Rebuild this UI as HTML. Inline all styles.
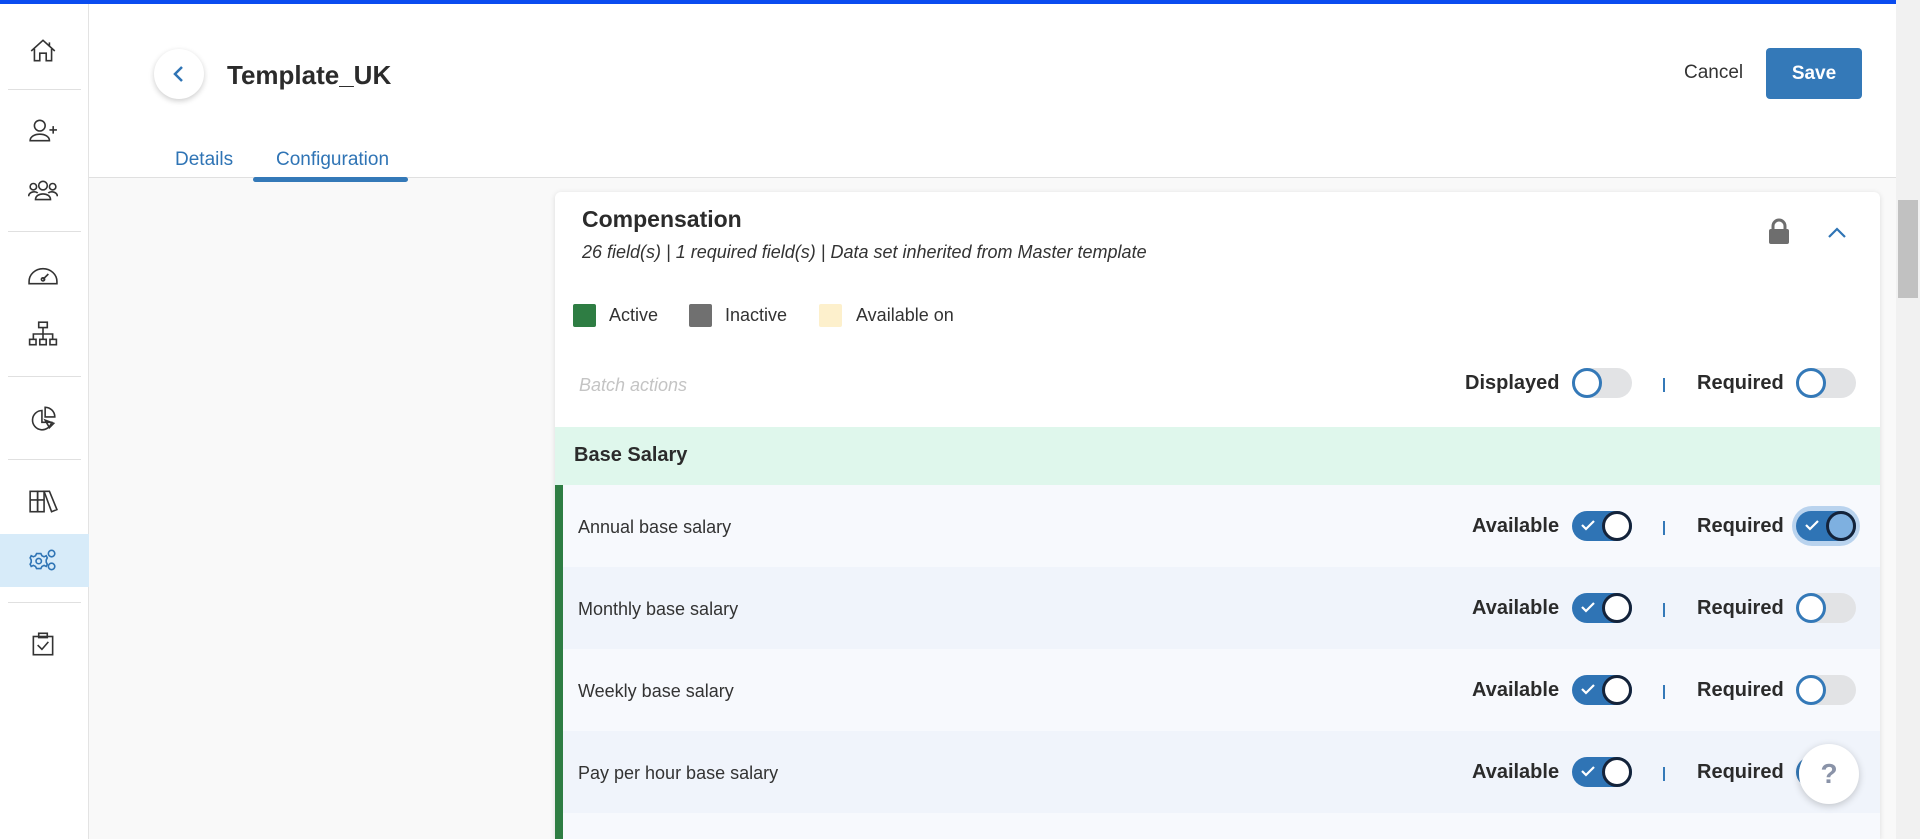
<!DOCTYPE html>
<html><head><meta charset="utf-8"><style>
*{box-sizing:border-box;margin:0;padding:0}
body{width:1920px;height:839px;overflow:hidden;font-family:"Liberation Sans",sans-serif;background:#f9f9f9;position:relative;color:#333}
.topbar{position:absolute;left:0;top:0;width:1920px;height:4px;background:#0a4cf0}
.side{position:absolute;left:0;top:4px;width:89px;height:835px;background:#fff;border-right:1px solid #e3e3e3}
.side .div{position:absolute;left:8px;width:73px;height:1px;background:#e0e0e0}
.side svg{position:absolute;left:28px;width:30px;height:30px;fill:none;stroke:#333;stroke-width:1.5}
.hl{position:absolute;left:0;top:530px;width:89px;height:53px;background:#d7ebf9}
.header{position:absolute;left:89px;top:4px;width:1807px;height:174px;background:#fff;border-bottom:1px solid #e0e0e0}
.back{position:absolute;left:65px;top:45px;width:50px;height:50px;border-radius:50%;background:#fff;box-shadow:0 2px 6px rgba(0,0,0,.2)}
.title{position:absolute;top:56px;font-size:26px;font-weight:bold;color:#2b2b2b}
.cancel{position:absolute;top:58px;font-size:19px;color:#333}
.save{position:absolute;top:44px;width:96px;height:51px;background:#3479b8;border-radius:4px;color:#fff;font-size:19px;font-weight:bold;text-align:center;line-height:51px}
.tab{position:absolute;top:145px;font-size:19px;color:#2f74b5}
.uline{position:absolute;width:155px;height:5px;border-radius:3px;background:#3479b8}
.scroll{position:absolute;left:1896px;top:0;width:24px;height:839px;background:#f1f1f1}
.thumb{position:absolute;left:1898px;top:200px;width:20px;height:98px;background:#c1c1c1}
.card{position:absolute;left:555px;top:192px;width:1325px;height:647px;background:#fff;border-radius:6px 6px 0 0;box-shadow:0 1px 6px rgba(0,0,0,.12);overflow:hidden}
.abs{position:absolute}
.sq{position:absolute;width:23px;height:23px;border-radius:2px}
.lbl{position:absolute;font-size:20px;font-weight:bold;color:#2b2b2b}
.bar{position:absolute;width:2px;height:14px;background:#3479b8}
.tg{position:absolute;width:60px;height:30px;border-radius:15px}
.tg.off{background:#e2e3e5}
.tg.off::after{content:"";position:absolute;left:0;top:0;width:30px;height:30px;border-radius:50%;border:3px solid #3479b8;background:#fff;box-sizing:border-box}
.tg.on{background:#2f74b5}
.tg.on::after{content:"";position:absolute;right:0;top:0;width:30px;height:30px;border-radius:50%;border:3px solid #14233a;background:#fff;box-sizing:border-box}
.tg.on.f::after{background:#7eb0e0}
.tg.on svg{position:absolute;left:9px;top:8px}
.row{position:absolute;left:8px;width:1317px;height:82px}
.row .t{position:absolute;left:15px;top:32px;font-size:18px;color:#333}
</style></head><body>
<div class="topbar"></div>
<div class="side">
<div class="hl"></div>
<svg style="top:32px" viewBox="0 0 28 28"><path d="M3 14 L14 4 L25 14 M6 12 V23 H11 V16 H17 V23 H22 V12 M20 6 V10"/></svg>
<div class="div" style="top:85px"></div>
<svg style="top:112px" viewBox="0 0 28 28"><circle cx="11" cy="9" r="5"/><path d="M2 23 C2 15 20 15 20 23 Z M20 13 H27 M23.5 9.5 V16.5"/></svg>
<svg style="top:172px" viewBox="0 0 28 28"><circle cx="5" cy="10" r="3"/><circle cx="14" cy="9" r="4"/><circle cx="23" cy="10" r="3"/><path d="M0.5 19 C1 14 8 14 9 16 M27.5 19 C27 14 20 14 19 16 M7 22 C7 15 21 15 21 22 Z"/></svg>
<div class="div" style="top:227px"></div>
<svg style="top:255px" viewBox="0 0 28 28"><path d="M1 21 A13 12 0 0 1 27 21 V23 H1 Z M14 19 L19 14 M5 18 L5 18 M8 12 L8 12 M14 10 L14 10"/><circle cx="14" cy="19" r="1.5"/></svg>
<svg style="top:315px" viewBox="0 0 28 28"><rect x="10" y="3" width="8" height="5"/><path d="M14 8 V14 M5 19 V14 H23 V19 M14 14 V19"/><rect x="1.5" y="19" width="6" height="5"/><rect x="11" y="19" width="6" height="5"/><rect x="20.5" y="19" width="6" height="5"/></svg>
<div class="div" style="top:372px"></div>
<svg style="top:399px" viewBox="0 0 28 28"><path d="M13 7 A9 9 0 1 0 22 18 H13 Z M16 4 A9 9 0 0 1 25 13 H16 Z M16 16 L24 19 L20 23 Z"/></svg>
<div class="div" style="top:455px"></div>
<svg style="top:482px" viewBox="0 0 28 28"><rect x="2" y="5" width="7" height="19"/><rect x="9" y="5" width="6" height="19"/><path d="M2 13 H15 M15 5 L20 5 L27 22 L22 24 Z"/></svg>
<svg style="top:541px;stroke:#2f74b5" viewBox="0 0 28 28"><path d="M10 8 L12 8 L13 10 L15 11 L17 10 L18 12 L17 14 L17 16 L18 18 L17 20 L15 19 L13 20 L12 22 L8 22 L7 20 L5 19 L3 20 L2 18 L3 16 L3 14 L2 12 L3 10 L5 11 L7 10 L8 8 Z"/><circle cx="10" cy="15" r="2.5"/><circle cx="22" cy="8" r="3"/><circle cx="22" cy="20" r="3"/></svg>
<div class="div" style="top:598px"></div>
<svg style="top:625px" viewBox="0 0 28 28"><rect x="5" y="7" width="18" height="17"/><rect x="10" y="4" width="8" height="4"/><path d="M9 15 L13 19 L19 12"/></svg>
</div>
<div class="header">
<div class="back"><svg style="position:absolute;left:17px;top:15px" width="16" height="20" viewBox="0 0 16 20"><path d="M11 3 L4 10 L11 17" fill="none" stroke="#2f74b5" stroke-width="2.5"/></svg></div>
<div class="title" style="left:138px">Template_UK</div>
<div class="cancel" style="left:1595px">Cancel</div>
<div class="save" style="left:1677px">Save</div>
<div class="tab" style="left:86px">Details</div>
<div class="tab" style="left:187px">Configuration</div>
<div class="uline" style="left:164px;top:173px"></div>
</div>
<div class="scroll"></div><div class="thumb"></div>
<div class="card">
<div class="abs" style="left:27px;top:14px;font-size:23px;font-weight:bold;color:#2b2b2b">Compensation</div>
<div class="abs" style="left:27px;top:50px;font-size:18px;font-style:italic;color:#333">26 field(s) | 1 required field(s) | Data set inherited from Master template</div>
<svg class="abs" style="left:1212px;top:25px" width="24" height="28" viewBox="0 0 24 28"><path d="M6 13 V9 A6 6 0 0 1 18 9 V13" fill="none" stroke="#6e6e6e" stroke-width="3"/><rect x="2" y="12" width="20" height="15" rx="2" fill="#6e6e6e"/></svg>
<svg class="abs" style="left:1272px;top:34px" width="20" height="14" viewBox="0 0 20 14"><path d="M2 11 L10 3 L18 11" fill="none" stroke="#2f74b5" stroke-width="2.2"/></svg>
<div class="sq" style="left:18px;top:112px;background:#2e7d43"></div>
<div class="abs" style="left:54px;top:113px;font-size:18px">Active</div>
<div class="sq" style="left:134px;top:112px;background:#707070"></div>
<div class="abs" style="left:170px;top:113px;font-size:18px">Inactive</div>
<div class="sq" style="left:264px;top:112px;background:#fdf0cc"></div>
<div class="abs" style="left:301px;top:113px;font-size:18px">Available on</div>
<div class="abs" style="left:24px;top:183px;font-size:18px;font-style:italic;color:#c4c4c4">Batch actions</div>
<div class="lbl" style="left:910px;top:180px">Displayed</div>
<div class="tg off" style="left:1017px;top:176px"></div>
<div class="bar" style="left:1108px;top:186px"></div>
<div class="lbl" style="left:1142px;top:180px">Required</div>
<div class="tg off" style="left:1241px;top:176px"></div>
<div class="abs" style="left:0;top:235px;width:1325px;height:58px;background:#dff7ec"></div>
<div class="abs" style="left:19px;top:252px;font-size:20px;font-weight:bold;color:#2b2b2b">Base Salary</div>
<div class="abs" style="left:0;top:293px;width:8px;height:400px;background:#2e7d43"></div>

<div class="row" style="top:293px;background:#f7f9fd"><div class="t">Annual base salary</div>
<div class="lbl" style="left:909px;top:30px">Available</div>
<div class="tg on" style="left:1009px;top:26px"><svg width="14" height="12" viewBox="0 0 14 12"><path d="M1 6 L5 10 L13 2" fill="none" stroke="#fff" stroke-width="2.2"/></svg></div>
<div class="bar" style="left:1100px;top:36px"></div>
<div class="lbl" style="left:1134px;top:30px">Required</div>
<div class="abs" style="left:1229px;top:21px;width:68px;height:40px;border-radius:20px;background:#b9d3ee"></div>
<div class="tg on f" style="left:1233px;top:26px"><svg width="14" height="12" viewBox="0 0 14 12"><path d="M1 6 L5 10 L13 2" fill="none" stroke="#fff" stroke-width="2.2"/></svg></div>
</div>

<div class="row" style="top:375px;background:#f0f4fb"><div class="t">Monthly base salary</div>
<div class="lbl" style="left:909px;top:30px">Available</div>
<div class="tg on" style="left:1009px;top:26px"><svg width="14" height="12" viewBox="0 0 14 12"><path d="M1 6 L5 10 L13 2" fill="none" stroke="#fff" stroke-width="2.2"/></svg></div>
<div class="bar" style="left:1100px;top:36px"></div>
<div class="lbl" style="left:1134px;top:30px">Required</div>
<div class="tg off" style="left:1233px;top:26px"></div>
</div>

<div class="row" style="top:457px;background:#f7f9fd"><div class="t">Weekly base salary</div>
<div class="lbl" style="left:909px;top:30px">Available</div>
<div class="tg on" style="left:1009px;top:26px"><svg width="14" height="12" viewBox="0 0 14 12"><path d="M1 6 L5 10 L13 2" fill="none" stroke="#fff" stroke-width="2.2"/></svg></div>
<div class="bar" style="left:1100px;top:36px"></div>
<div class="lbl" style="left:1134px;top:30px">Required</div>
<div class="tg off" style="left:1233px;top:26px"></div>
</div>

<div class="row" style="top:539px;background:#f0f4fb"><div class="t">Pay per hour base salary</div>
<div class="lbl" style="left:909px;top:30px">Available</div>
<div class="tg on" style="left:1009px;top:26px"><svg width="14" height="12" viewBox="0 0 14 12"><path d="M1 6 L5 10 L13 2" fill="none" stroke="#fff" stroke-width="2.2"/></svg></div>
<div class="bar" style="left:1100px;top:36px"></div>
<div class="lbl" style="left:1134px;top:30px">Required</div>
<div class="tg off" style="left:1233px;top:26px"></div>
</div>

<div class="row" style="top:621px;background:#f7f9fd">
<div class="tg on" style="left:1009px;top:26px"></div>
<div class="tg off" style="left:1233px;top:26px"></div>
</div>
</div>
<div class="abs" style="left:1799px;top:744px;width:60px;height:60px;border-radius:50%;background:#fff;box-shadow:0 2px 8px rgba(0,0,0,.2);text-align:center;line-height:60px;font-size:28px;font-weight:bold;color:#8a93a8">?</div>
</body></html>
